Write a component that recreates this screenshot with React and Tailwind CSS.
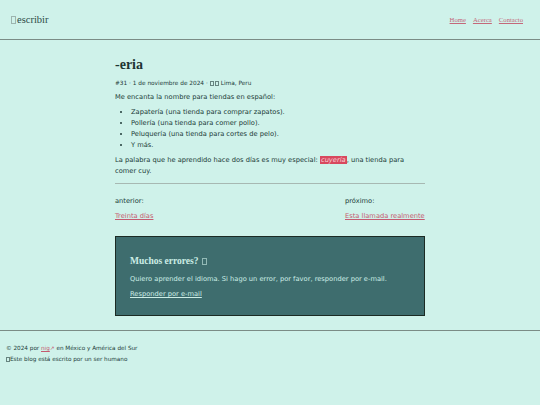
import React from 'react';

const Tofu = ({ className = '' }) => (
  <span className={`inline-block border border-current opacity-60 align-baseline ${className}`} />
);

export default function App() {
  return (
    <div className="min-h-[405px] bg-[#cff2ea] text-[#213b38]" style={{ fontFamily: '"DejaVu Sans", Verdana, sans-serif' }}>
      {/* Header */}
      <header className="h-[40px] flex items-center justify-between pl-[11px] pr-[17px] border-b border-[#7b8c86]">
        <div className="flex items-center text-[10.5px] text-[#2d4a47] pt-[1px]" style={{ fontFamily: '"Liberation Serif", "Times New Roman", serif' }}>
          <Tofu className="w-[5px] h-[8px] mr-[1px] text-[#7a8a86]" />
          escribir
        </div>
        <nav className="flex gap-[7px] text-[6.7px] text-[#c4687a] pt-[1px]" style={{ fontFamily: '"Liberation Serif", "Times New Roman", serif' }}>
          <a className="underline">Home</a>
          <a className="underline">Acerca</a>
          <a className="underline">Contacto</a>
        </nav>
      </header>

      {/* Main */}
      <main className="w-[310px] mx-auto pt-[16px]">
        <h1 className="text-[14px] font-bold leading-[18px] text-[#1e3533]" style={{ fontFamily: '"Liberation Serif", "Times New Roman", serif' }}>
          -eria
        </h1>
        <p className="text-[5.8px] leading-[8px] mt-[5px] flex items-center">
          #31 · 1 de noviembre de 2024 ·
          <Tofu className="w-[4px] h-[5px] ml-[2px]" />
          <Tofu className="w-[4px] h-[5px] ml-[1px] mr-[2px]" />
          Lima, Peru
        </p>
        <div className="text-[6.7px] leading-[11px] mt-[5px]">
          <p>Me encanta la nombre para tiendas en español:</p>
          <ul className="list-disc pl-[16px] mt-[4px]">
            <li>Zapatería (una tienda para comprar zapatos).</li>
            <li>Pollería (una tienda para comer pollo).</li>
            <li>Peluquería (una tienda para cortes de pelo).</li>
            <li>Y más.</li>
          </ul>
          <p className="mt-[4px]">
            La palabra que he aprendido hace dos días es muy especial:{' '}
            <span className="bg-[#d8485e] text-[#f7d3d9] italic px-[1px]">cuyería</span>, una tienda para comer cuy.
          </p>
        </div>
        <hr className="mt-[6px] border-0 border-t border-[#a7b8b2]" />

        <div className="flex justify-between text-[6.7px] leading-[15px] mt-[10px]">
          <div>
            <p>anterior:</p>
            <a className="text-[#c45b70] underline">Treinta días</a>
          </div>
          <div className="w-[80px]">
            <p>próximo:</p>
            <a className="text-[#c45b70] underline">Esta llamada realmente</a>
          </div>
        </div>

        <section className="mt-[12px] bg-[#3e6d6e] border-[1.5px] border-[#1b2b24] px-[14px] pt-[17px] pb-[15px] text-[#cdeee6]">
          <h2 className="text-[9.5px] font-bold leading-[14px] flex items-center" style={{ fontFamily: '"Liberation Serif", "Times New Roman", serif' }}>
            Muchos errores?
            <Tofu className="w-[5px] h-[7px] ml-[3px]" />
          </h2>
          <p className="text-[6.7px] leading-[11px] mt-[6px]">
            Quiero aprender el idioma. Si hago un error, por favor, responder por e-mail.
          </p>
          <a className="text-[6.7px] leading-[11px] underline block mt-[4px]">Responder por e-mail</a>
        </section>
      </main>

      {/* Footer */}
      <footer className="mt-[14px] border-t border-[#7b8c86] px-[6px] pt-[12px] text-[5.7px] leading-[11px]">
        <p>
          © 2024 por <a className="text-[#c45b70] underline">nig</a><span className="text-[#c45b70]">↗</span> en México y América del Sur
        </p>
        <p className="flex items-center">
          <Tofu className="w-[4px] h-[5px]" />
          Este blog está escrito por un ser humano
        </p>
      </footer>
    </div>
  );
}
